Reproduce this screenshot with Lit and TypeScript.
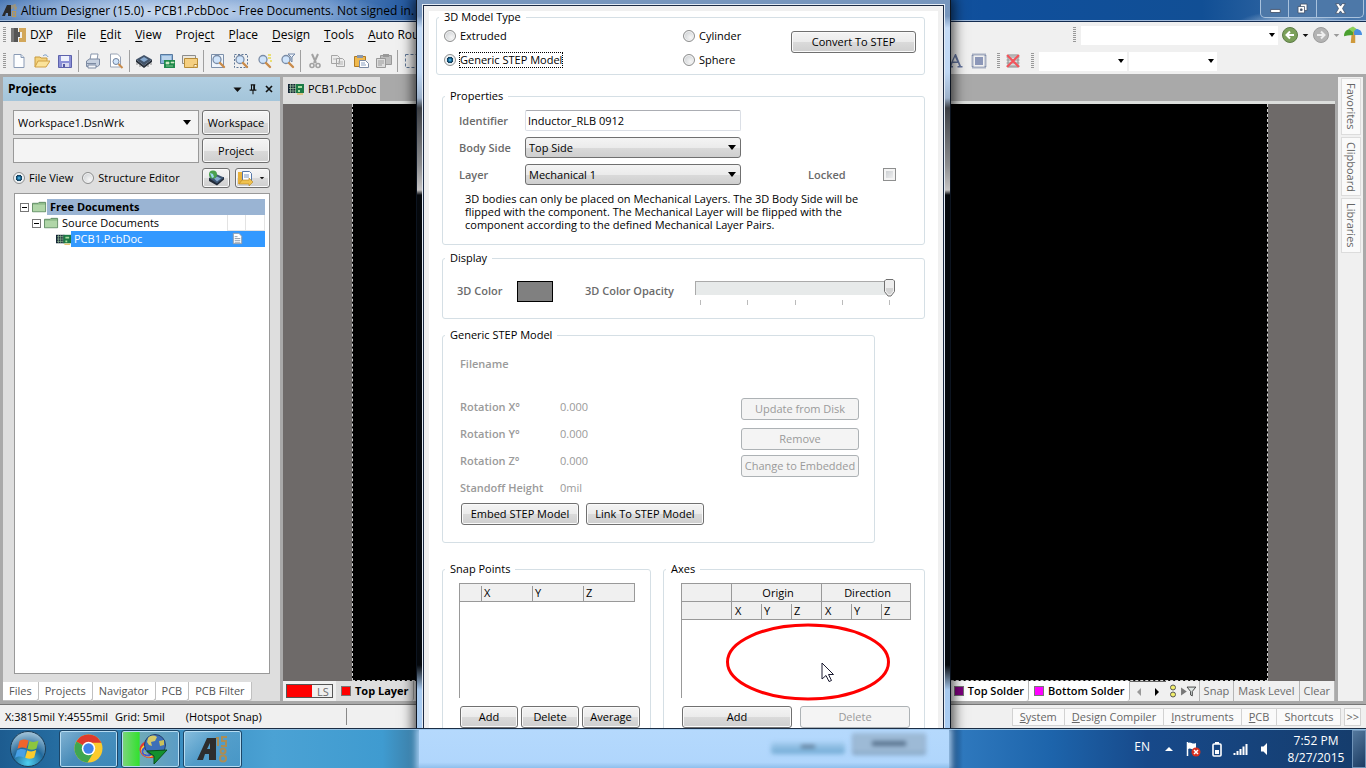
import { LitElement, html, css, svg, nothing } from "lit";
import { customElement } from "lit/decorators.js";

const pcbGlyph = svg`<rect x="0" y="3" width="9" height="9" fill="#123"/><path d="M1 5h7M1 7.500h7M1 10h7M2.500 3v9M5 3v9M7.500 3v9" stroke="#9fc79f" stroke-width=".7"/><path d="M8 3h8v9H8z" fill="#1c7a45"/><path d="M10 5h4v2h-4zM10 9h2v2h-2z" fill="#a8e0a0"/><path d="M9 13h6" stroke="#d9a92b"/>`;
const lens = svg`<circle cx="7" cy="6.500" r="4" fill="#cfe4fb" stroke="#7a8ca6" stroke-width="1.300"/><path d="M10 10l4 4" stroke="#c98b4a" stroke-width="2.400" stroke-linecap="round"/>`;

const ICONS: Record<string, unknown> = {
  logo: svg`<path d="M1 13L6 2h4v11H7v-3H5l-1 3z" fill="#2b2b2b"/><path d="M11 2v4M15 2h-2v2h2v2h-2M11.500 8.500v5h3v-5zM11.500 11h3" stroke="#b5975c" fill="none" stroke-width="1.200"/>`,
  dxp: svg`<path d="M0 1h7v4h2v5H7v5H0z" fill="#555"/><path d="M8 1h7v14H8v-4h3V5H8z" fill="#d2a75b"/><path d="M0 1h3v14H0z" fill="#777"/>`,
  page: svg`<path d="M3 1.500h7l3 3v10H3z" fill="#fdfeff" stroke="#8a9bb5"/><path d="M10 1.500v3h3" fill="#dce6f2" stroke="#8a9bb5"/>`,
  open: svg`<path d="M1 14V4h5l1 1h6v3" fill="#f3d27c" stroke="#c79a3e"/><path d="M1 14l3-6h12l-4 6z" fill="#fbe39a" stroke="#d0a044"/><path d="M9 3c2-2 4-1 5 1" fill="none" stroke="#6d96c5"/>`,
  save: svg`<path d="M1.500 2.500h13v12h-13z" fill="#8a8fd6" stroke="#5d62ab"/><path d="M4 3h8v5H4z" fill="#eef1fb"/><path d="M5 10h7v4H5z" fill="#d6d8ef"/><path d="M6 11h2v3H6z" fill="#5357a0"/>`,
  print: svg`<path d="M5 7l1-6h7l-1 6z" fill="#fff" stroke="#8795ab"/><path d="M1.500 8l3-2h10v6l-2 1.500h-11z" fill="#c6d0df" stroke="#7c8aa2"/><path d="M2 10.500h9" stroke="#7c8aa2"/><path d="M3 12h8v3H3z" fill="#f4f6fa" stroke="#7c8aa2"/>`,
  preview: svg`<path d="M2.500 1h7l3 3v10h-10z" fill="#fff" stroke="#98a3b4"/><circle cx="8" cy="8.500" r="3" fill="#cfe4fb" stroke="#71829b"/><path d="M10.500 11l4 4" stroke="#c98b4a" stroke-width="2"/>`,
  chip: svg`<path d="M0 6.500l8 6 8-6V9l-8 6-8-6z" fill="#29303a"/><path d="M0 6.500L8 2l8 4.500-8 6z" fill="#43546a"/><path d="M4 6.500L8 4l4 2.500L8 9z" fill="#86a9cf"/><path d="M1 10v2M4 12v2M12 12v2M15 10v2" stroke="#888"/>`,
  board: svg`<path d="M1.500 1.500h12v9h-12z" fill="#8fb6dc" stroke="#58799e"/><path d="M3 4h9M3 6h9" stroke="#e8f2fb"/><path d="M5 7h11v8H5z" fill="#1f8a4c"/><path d="M7 9h3v2H7zM12 9h3v1h-3zM7 13h7" fill="#cdeac4" stroke="#cdeac4" stroke-width=".6"/>`,
  docs: svg`<path d="M.500 2.500h13v8h-13z" fill="#ece8dd" stroke="#8c8c8c"/><path d="M2.500 5.500h13v9h-13z" fill="#f5cf80" stroke="#b78c38"/><path d="M12 14.500v-3h3" fill="#fff" stroke="#b78c38"/>`,
  zoomDoc: svg`<path d="M1.500 1.500h12v13h-12z" fill="#eef4fb" stroke="#7d90aa"/>${lens}`,
  zoomSel: svg`<path d="M1.500 1.500h13v13h-13z" fill="none" stroke="#5f7797" stroke-dasharray="2 1.500"/>${lens}`,
  zoomFit: svg`${lens}<path d="M12 2h3M12 5h3M14 8h2" stroke="#e7d94b" stroke-width="1.500"/>`,
  zoomFilter: svg`${lens}<path d="M9 1h7l-3 3v5l-1-1V4z" fill="#eef3fa" stroke="#7288a8"/>`,
  cut: svg`<path d="M5 1l4 9M11 1L7 10" stroke="#a2a2a2" stroke-width="2"/><circle cx="5" cy="12.500" r="2" fill="none" stroke="#a2a2a2" stroke-width="1.600"/><circle cx="11" cy="12.500" r="2" fill="none" stroke="#a2a2a2" stroke-width="1.600"/>`,
  copy: svg`<path d="M1.500 2.500h6l2 2v6h-8zM6.500 5.500h6l2 2v6h-8z" fill="#ececec" stroke="#a5a5a5"/><path d="M8 9h5M8 11h5M3 6h3" stroke="#b5b5b5"/>`,
  paste: svg`<path d="M1.500 3.500h11v10h-11z" fill="#f0b94d" stroke="#b07a23"/><path d="M4 2h6v3H4z" fill="#8a98ad"/><path d="M6.500 7.500h6l3 3v4h-9z" fill="#fff" stroke="#7a8aa3"/><path d="M8 10h4M8 12h5" stroke="#8aa0c0"/>`,
  pasteGrey: svg`<path d="M4.500 2.500h11v9h-11z" fill="#bdbdbd" stroke="#999"/><path d="M7 1h6v3H7z" fill="#999"/><path d="M.500 5.500h9v9h-9z" fill="#ddd" stroke="#999"/><path d="M2 8h6M2 10h6M2 12h4" stroke="#9c9c9c"/>`,
  dashed: svg`<path d="M1.500 1.500h13v13h-13z" fill="none" stroke="#5f7797" stroke-dasharray="3 2"/>`,
  letterA: svg`<path d="M8 1h1l5 12h1.500v1.500h-5V13H12l-1-3H5.500l-1 3H6v1.500H1V13h1.500zM8 4L6 8.500h4z" fill="#65759f"/>`,
  component: svg`<path d="M4 4h8v8H4z" fill="#8c97b8"/><rect x="1.500" y="1.500" width="13" height="13" fill="none" stroke="#5f6f94" stroke-width="2" stroke-dasharray="1 1"/>`,
  clear: svg`<path d="M3 2h10v12H3z" fill="#ddd" stroke="#888"/><path d="M1.500 4h13M1.500 7h13M1.500 10h13M1.500 13h13" stroke="#999"/><path d="M2 2l12 12M14 2L2 14" stroke="#f4535a" stroke-width="2"/>`,
  back: svg`<circle cx="8" cy="8" r="7.500" fill="#7ba05a" stroke="#5e7c48"/><path d="M12 8H5M8 4.500L4.500 8 8 11.500" stroke="#fff" stroke-width="2" fill="none"/>`,
  forward: svg`<circle cx="8" cy="8" r="7.500" fill="#b3b3b3" stroke="#9c9c9c"/><path d="M4 8h7M8 4.500L11.500 8 8 11.500" stroke="#eee" stroke-width="2" fill="none"/>`,
  palm: svg`<path d="M7 4h3v11H6z" fill="#cf9a3c"/><path d="M0 9c0-5 4-7 8-6v5l-5 .500z" fill="#4aa02f"/><path d="M9 3c4-1 7 1 7 5H9z" fill="#4c8fe0"/><path d="M4 2.500L8 .500l3 2-3 3z" fill="#8ed05a"/>`,
  pcb: pcbGlyph,
  folder: svg`<path d="M.500 12.500v-9h6l1-1h7v10z" fill="#8fbd8a" stroke="#5e8a62"/><path d="M1 5h13v7H1z" fill="#b0d6a8"/>`,
  sheet: svg`<path d="M3.500 2.500h6l3 3v8h-9z" fill="#fff" stroke="#8a97a8"/><path d="M5 6h3M5 8h6M5 10h6M5 12h6" stroke="#7a8797" stroke-width=".8"/>`,
  globeChip: svg`<path d="M1 8v3l8 4.500 7-6V7z" fill="#222b38"/><path d="M1 8l7-4 8 3.500-7 6z" fill="#3e5673"/><path d="M6 8.500L9 6.500l4 2-4 3z" fill="#86a9cf"/><circle cx="5" cy="4.500" r="4" fill="#4aa04e"/><path d="M2 3l3 1 1 3-2 1z" fill="#9ed6f0"/>`,
  folderDoc: svg`<path d="M1 2h6l1 2v10H1z" fill="#e9b23c"/><path d="M5.500 1.500h7l2 2v8h-9z" fill="#fff" stroke="#5778a8"/><path d="M7 5h5M7 7h5" stroke="#7b98c4"/><path d="M2 14l3-4h7V8l4 4-4 4v-2z" fill="#f0c24e" stroke="#b18120" stroke-width=".6"/>`,
  pin: svg`<path d="M5 2.500h6M6 3v6M10 3v6M9 3v6M3.500 9.500h9M8 10v5" stroke="#111" stroke-width="1.400"/>`,
  cross: svg`<path d="M4 4l8 8M12 4l-8 8" stroke="#111" stroke-width="2.200"/>`,
  down: svg`<path d="M3 5.500h10L8 11z" fill="#111"/>`,
  smallDown: svg`<path d="M5 6.500h6L8 9.500z" fill="#111"/>`,
  greyDown: svg`<path d="M5 6.500h6L8 9.500z" fill="#999"/>`,
  prev: svg`<path d="M10 4v8L6 8z" fill="#999"/>`,
  next: svg`<path d="M6 4v8l4-4z" fill="#000"/>`,
  dots: svg`<circle cx="6" cy="4.500" r="2.500" fill="#f1ee6a" stroke="#555"/><circle cx="6" cy="11.500" r="2.500" fill="#f1ee6a" stroke="#555"/>`,
  play: svg`<path d="M5 3v10l7-5z" fill="#777"/>`,
  funnel: svg`<path d="M3.500 3.500h10l-4 5v5l-2-1v-4z" fill="#dfe6e4" stroke="#333"/>`,
  minimise: svg`<path d="M3 8.500h11v3.500H3z" fill="#fff" stroke="#43536b"/>`,
  restore: svg`<path d="M5.500 2.500h8v8h-8z" fill="#fff" stroke="#43536b"/><path d="M2.500 5.500h8v8h-8z" fill="#fff" stroke="#43536b"/><path d="M5.500 8.500h2v2h-2z" fill="#43536b" stroke="#43536b"/>`,
  close: svg`<path d="M2 2h4l2 3 2-3h4l-3.500 6 3.500 6h-4l-2-3-2 3H2l3.500-6z" fill="#fff" stroke="#43536b"/>`,
  up: svg`<path d="M4 10h8L8 6z" fill="#fff"/>`,
  flag: svg`<path d="M2.500 1v14" stroke="#fff" stroke-width="1.500"/><path d="M3 2c3-2 4 2 8 0v6c-4 2-5-2-8 0z" fill="#fff"/><circle cx="11" cy="11" r="4.500" fill="#d9301f"/><path d="M9 9l4 4M13 9l-4 4" stroke="#fff" stroke-width="1.500"/>`,
  battery: svg`<rect x="4" y="3" width="8" height="12" rx="1" fill="none" stroke="#fff" stroke-width="1.600"/><path d="M6 1h4v2H6zM6 9h4v4H6z" fill="#fff"/>`,
  signal: svg`<path d="M1.500 12v2M4.500 10v4M7.500 8v6M10.500 5.500V14M13.500 3v11" stroke="#fff" stroke-width="2"/>`,
  speaker: svg`<path d="M4 5.500h2.500L10 2v12l-3.500-3.500H4z" fill="#fff"/>`,
};

const icon = (name: string, size = 16) =>
  html`<svg class="icon" width=${size} height=${size} viewBox="0 0 16 16" aria-hidden="true">${ICONS[name]}</svg>`;

const arrow = css`url("data:image/svg+xml,%3Csvg xmlns='http://www.w3.org/2000/svg' width='8' height='5'%3E%3Cpath d='M0 0h8L4 5z' fill='%23000'/%3E%3C/svg%3E")`;
const smallArrow = css`url("data:image/svg+xml,%3Csvg xmlns='http://www.w3.org/2000/svg' width='6' height='4'%3E%3Cpath d='M0 0h6L3 4z' fill='%23000'/%3E%3C/svg%3E")`;
const thumb = css`url("data:image/svg+xml,%3Csvg xmlns='http://www.w3.org/2000/svg' width='11' height='18'%3E%3Cpath d='M2 .5h7L10.500 2v10.500L7 17H4L.5 12.500V2z' fill='%23eee' stroke='%23707070'/%3E%3Cpath d='M2 9h7v3L6.500 15h-2L2 12z' fill='%23d4d4d4'/%3E%3C/svg%3E")`;

const shared = css`
  * { box-sizing: border-box; }
  .icon { display: block; flex: none; }
  button, input, select { font: inherit; color: inherit; margin: 0; }
  button { padding: 0; }
  .push {
    height: 22px;
    border: 1px solid #707070;
    border-radius: 3px;
    background: linear-gradient(#f4f4f4, #ebebeb 50%, #dadada 52%, #cfcfcf);
    box-shadow: inset 0 0 0 1px #fafafa;
    color: #000;
    white-space: nowrap;
  }
  .push:disabled { background: #f4f4f4; border-color: #adb2b5; color: #9a9a9a; box-shadow: none; }
  input[type="radio"] {
    appearance: none;
    width: 12px;
    height: 12px;
    flex: none;
    border: 1px solid #8e8f8f;
    border-radius: 50%;
    background: radial-gradient(circle at 65% 65%, #f6f6f6, #c4c8cc);
    box-shadow: inset 0 0 0 1px #f4f4f4;
  }
  input[type="radio"]:checked {
    background: radial-gradient(circle, #6fd0f5 0, #1b6f9f 22%, #10354f 42%, #e6edf2 50%);
  }
  .radio { display: flex; align-items: center; gap: 4px; }
`;

const MENU = [["", "F", "ile"], ["", "E", "dit"], ["", "V", "iew"], ["Proje", "c", "t"], ["", "P", "lace"], ["", "D", "esign"], ["", "T", "ools"], ["", "A", "uto Route"]];
const TOOLS = [
  ["page", "open", "save"],
  ["print", "preview"],
  ["chip", "board", "docs"],
  ["zoomDoc", "zoomSel", "zoomFit", "zoomFilter"],
  ["cut", "copy", "paste", "pasteGrey"],
  ["dashed"],
];

@customElement("title-menu")
class TitleMenu extends LitElement {
  static styles = [shared, css`
    :host { display: block; background: #f0f0f0; font-size: 12px; }
    .title {
      height: 22px;
      display: flex;
      align-items: center;
      padding-left: 1px;
      gap: 4px;
      border-bottom: 1px solid #142c50;
      box-shadow: inset 0 -1px #9fb9da;
      background:
        radial-gradient(ellipse 220px 24px at 170px 12px, #e0eaf7d8, #bcd0eb80 60%, transparent),
        radial-gradient(ellipse 60px 16px at 1295px 26px, #cddcec, transparent),
        linear-gradient(90deg, #3c6dae 0, #6d97cd 10%, #5b89c4 24%, #24599f 30%, #2a5f9f 50%, #0f4f9c 72%, #114f95 88%, #4c7aae);
    }
    .title .name { flex: 1; line-height: 20px; }
    .win { display: flex; align-self: flex-start; margin-right: 2px; height: 18px; border: 1px solid #a9c2dd; border-top: 0; border-radius: 0 0 5px 5px; background: #4d78a8; }
    .win button { display: grid; place-items: center; border: 0; border-right: 1px solid #a9c2dd; background: none; width: 28px; }
    .win button:last-child { width: 46px; border: 0; }
    .row { height: 26px; display: flex; align-items: center; padding-left: 3px; }
    .grip { width: 3px; height: 16px; flex: none; background: repeating-linear-gradient(#999 0 1px, transparent 1px 2px); }
    nav { display: flex; align-items: center; gap: 14px; margin-left: 5px; }
    nav a { color: #000; text-decoration: none; white-space: nowrap; }
    nav u { text-underline-offset: 2px; }
    nav .dxp { display: flex; align-items: center; gap: 3px; }
    .tools { display: flex; align-items: center; margin-left: 1px; }
    .tools button { width: 23px; height: 24px; display: grid; place-items: center; border: 0; background: none; }
    .sep { width: 1px; height: 22px; background: #a0a0a0; margin: 0 2px; }
    .end { margin-left: auto; display: flex; align-items: center; padding-right: 4px; }
    .end button { border: 0; background: none; }
    .end .grip { margin-right: 5px; }
    .format { padding-right: 147px; }
    .format button { margin-right: 8px; }
    .format .grip { margin-left: 2px; }
    .combo { appearance: none; border: 0; height: 19px; width: 88px; border-radius: 0; background: #fff ${smallArrow} no-repeat right 3px center; margin-right: 2px; }
    .combo.wide { width: 197px; margin-right: 4px; }
  `];
  render() {
    return html`
      <header class="title">${icon("logo")}<span class="name">Altium Designer (15.0) - PCB1.PcbDoc - Free Documents. Not signed in.</span>
        <span class="win"><button aria-label="Minimise">${icon("minimise", 14)}</button><button aria-label="Restore">${icon("restore", 13)}</button><button aria-label="Close">${icon("close", 13)}</button></span>
      </header>
      <div class="row"><span class="grip"></span>
        <nav><a href="#" class="dxp">${icon("dxp")}<span>D<u>X</u>P</span></a>${MENU.map(([a, u, b]) => html`<a href="#">${a}<u>${u}</u>${b}</a>`)}</nav>
        <div class="end"><span class="grip"></span><select class="combo wide" aria-label="Address"></select>
          <button aria-label="Back">${icon("back")}</button><button aria-label="Back history">${icon("smallDown", 15)}</button>
          <button aria-label="Forward">${icon("forward")}</button><button aria-label="Forward history">${icon("greyDown", 15)}</button>
          <button aria-label="Home">${icon("palm", 18)}</button></div>
      </div>
      <div class="row"><span class="grip"></span>
        <div class="tools">${TOOLS.map((g, i) => html`${i ? html`<span class="sep"></span>` : nothing}${g.map((n) => html`<button aria-label=${n}>${icon(n)}</button>`)}`)}</div>
        <div class="end format"><button aria-label="Text">${icon("letterA")}</button><button aria-label="Component">${icon("component")}</button><span class="grip"></span><button aria-label="Clear">${icon("clear")}</button><span class="grip"></span><select class="combo" aria-label="Filter"></select><select class="combo" aria-label="Mask"></select></div>
      </div>`;
  }
}

@customElement("projects-panel")
class ProjectsPanel extends LitElement {
  static styles = [shared, css`
    :host { display: flex; flex-direction: column; width: 277px; background: #dedede; }
    header { height: 24px; flex: none; display: flex; align-items: center; padding: 0 3px 0 5px; background: linear-gradient(#b2cfe2, #a4c5da); font-size: 12px; font-weight: 700; }
    header span { flex: 1; }
    header button { border: 0; background: none; width: 16px; display: grid; place-items: center; }
    .body { flex: 1; display: flex; flex-direction: column; padding: 9px 10px 8px; }
    .pick { display: grid; grid-template-columns: 1fr 68px; gap: 3px; }
    .pick .push { height: 25px; }
    .field { height: 25px; min-width: 0; border: 1px solid #999; border-radius: 0; padding: 0 4px; background: #f4f4f4; }
    select.field { appearance: none; background: #f4f4f4 ${arrow} no-repeat right 7px center; }
    .view { display: flex; align-items: center; gap: 9px; height: 20px; margin: 5px 0; }
    .view .push { height: 20px; display: flex; align-items: center; justify-content: center; width: 28px; }
    .view .push.first { margin-left: auto; }
    .view .push.split { width: 35px; margin-left: -4px; gap: 3px; }
    .tree { flex: 1; margin: 0 0 0 1px; border: 1px solid #999; background: #fff; padding: 5px 4px 0 5px; }
    .node { display: flex; align-items: center; height: 16px; }
    .box { width: 9px; height: 9px; border: 1px solid #777; background: linear-gradient(#000, #000) center / 5px 1px no-repeat; margin-right: 3px; flex: none; }
    .text { flex: 1; line-height: 16px; padding-left: 3px; height: 16px; display: flex; justify-content: space-between; }
    .root .text { background: #9ab4d3; font-weight: 700; }
    .l2 { padding-left: 12px; }
    .l2 .text::after { content: ""; width: 36px; border: 1px solid #e3e3e3; border-top: 0; background: linear-gradient(#e3e3e3, #e3e3e3) 17px 0 / 1px 100% no-repeat; }
    .l3 { padding-left: 36px; }
    .l3 .text { background: #3399ff; color: #fff; padding-right: 20px; }
    .tabs { display: flex; height: 19px; flex: none; }
    .tabs button { flex: none; border: 1px solid #c0c0c0; border-width: 0 1px 1px 0; border-radius: 0 0 3px 0; background: #fff; color: #555; padding: 0 6px; }
  `];
  render() {
    return html`
      <header><span>Projects</span><button aria-label="Options">${icon("down", 13)}</button><button aria-label="Pin">${icon("pin", 12)}</button><button aria-label="Close">${icon("cross", 12)}</button></header>
      <div class="body">
        <div class="pick">
          <select class="field" aria-label="Workspace file"><option>Workspace1.DsnWrk</option></select><button class="push">Workspace</button>
          <input class="field" aria-label="Project file"><button class="push">Project</button>
        </div>
        <div class="view">
          <label class="radio"><input type="radio" name="v" checked>File View</label>
          <label class="radio"><input type="radio" name="v">Structure Editor</label>
          <button class="push first" aria-label="Compile">${icon("globeChip")}</button>
          <button class="push split" aria-label="Open documents">${icon("folderDoc")}${icon("smallDown", 12)}</button>
        </div>
        <div class="tree">
          <div class="node root"><span class="box"></span>${icon("folder", 15)}<span class="text">Free Documents</span></div>
          <div class="node l2"><span class="box"></span>${icon("folder", 15)}<span class="text">Source Documents</span></div>
          <div class="node l3">${icon("pcb", 15)}<span class="text">PCB1.PcbDoc ${icon("sheet", 15)}</span></div>
        </div>
      </div>
      <div class="tabs">${["Files", "Projects", "Navigator", "PCB", "PCB Filter"].map((t) => html`<button>${t}</button>`)}</div>`;
  }
}

@customElement("pcb-editor")
class PcbEditor extends LitElement {
  static styles = [shared, css`
    :host { display: flex; flex-direction: column; min-width: 0; }
    .tab { height: 24px; width: 97px; flex: none; display: flex; align-items: center; gap: 4px; padding-left: 5px; background: #dedede; }
    .canvas { flex: 1; display: grid; padding: 0 67px 0 69px; background: #6e6a69; border-top: 3px solid #dcdedc; }
    .board { background: #000; border: 1px dashed #d0d0d0; border-top: 0; }
    .bar { height: 20px; flex: none; display: flex; background: #f0f0f0; color: #6a6a6a; }
    .ls { display: flex; width: 47px; height: 14px; margin: 3px 3px 0; border: 1px solid #555; line-height: 13px; }
    .ls i { width: 25px; background: red; margin-right: 5px; }
    .layer { display: flex; align-items: center; gap: 4px; padding: 0 4px 0 5px; border: 0; border-right: 1px solid #aaa; border-radius: 0 0 3px 0; background: #fff; color: #000; font-weight: 600; }
    .layer.on { background: #dedede; font-weight: 700; }
    .layer i { width: 10px; height: 10px; border: 1px solid #777; }
    .red { background: red; } .purple { background: #800080; } .pink { background: #f0f; }
    .right { margin-left: auto; display: flex; }
    .right button { border: 0; border-right: 1px solid #b5b5b5; background: #f0f0f0; padding: 0 4px; display: flex; align-items: center; }
    .right .layer { background: #fff; padding: 0 4px 0 5px; }
    .right .nav { border-top: 1px solid #666; border-right: 0; padding: 0 1px; }
    .right .filter .icon { margin: 0 -3px; }
  `];
  render() {
    const layer = (c: string, t: string, on = false) => html`<button class="layer ${on ? "on" : ""}"><i class=${c}></i>${t}</button>`;
    return html`
      <div class="tab">${icon("pcb", 16)}PCB1.PcbDoc</div>
      <div class="canvas"><div class="board"></div></div>
      <div class="bar"><span class="ls"><i></i>LS</span>${layer("red", "Top Layer", true)}
        <div class="right">${layer("purple", "Top Solder")}${layer("pink", "Bottom Solder")}
          <button class="nav" aria-label="Previous layers">${icon("prev")}</button><button class="nav" aria-label="Next layers">${icon("next")}</button>
          <button class="filter" aria-label="Filter">${icon("dots")}${icon("play", 13)}${icon("funnel", 14)}</button>
          <button>Snap</button><button>Mask Level</button><button>Clear</button></div>
      </div>`;
  }
}

@customElement("model-dialog")
class ModelDialog extends LitElement {
  static styles = [shared, css`
    :host {
      display: block;
      padding: 4px 5px 0;
      border: 1px solid #0c1420;
      border-width: 0 1px;
      background: linear-gradient(#7796bd 0, #7796bd 16px, #c5dbf5 28px, #c0d8f4 72px, #9db1ca 98px, #3c3f44 108px, #8b8c8e 165px, #c5c3c3 190px, #05080c 195px, #05080c 665px, #a8caef 690px, #b4d7fc);
      box-shadow: 0 0 12px 3px #000000b0;
    }
    .glass { border: 1px solid #e4ecf5; border-bottom: 0; }
    .client { border: 1px solid #1d2b44; border-bottom: 0; background: #f0f0f0; padding: 5px 5px 0; }
    .page { position: relative; background: #fff; padding: 0 13px; min-height: 860px; }
    fieldset { margin: 0; min-width: 0; border: 1px solid #d5dfe5; border-radius: 3px; --inset: 16px; }
    legend { padding: 0 5px; margin-left: calc(2px - var(--inset)); line-height: 12px; }
    .type { --inset: 7px; display: grid; grid-template-columns: 239px 108px 125px; grid-auto-rows: 24px; margin-left: -6px; padding: 1px 8px 2px var(--inset); }
    .type .push { grid-area: 1 / 3 / 3 / 4; margin-top: 7px; }
    .focus { outline: 1px dotted #000; }
    .props { margin-top: 15px; padding: 8px 8px 13px var(--inset); }
    .grid { display: grid; grid-template-columns: 66px 216px 67px 75px 13px; grid-auto-rows: 21px; row-gap: 6px; align-items: center; }
    .grid .name { grid-column: 1; }
    .name { color: #6a6a6a; font-weight: 600; }
    .field { height: 21px; border: 1px solid #dbdfe6; border-top-color: #abadb3; border-radius: 2px; padding: 0 2px; background: #fff; }
    select.drop { appearance: none; height: 21px; padding: 0 3px; background: ${arrow} no-repeat right 4px center, linear-gradient(#f4f4f4, #ebebeb 50%, #dadada 52%, #cfcfcf); border: 1px solid #707070; border-radius: 3px; }
    .grid .locked { grid-area: 3 / 4; }
    input[type="checkbox"] { grid-area: 3 / 5; appearance: none; width: 13px; height: 13px; border: 1px solid #8e8f8f; background: linear-gradient(135deg, #c4c8cc, #f6f6f6); box-shadow: inset 0 0 0 2px #f4f4f4; }
    p { margin: 7px 0 0 6px; width: 404px; line-height: 13px; }
    .display { --inset: 14px; margin-top: 7px; padding: 15px 8px 13px var(--inset); height: 67px; display: flex; align-items: flex-start; }
    .display .name { line-height: 24px; }
    .display label.name { width: 60px; }
    .display .opacity.name { width: 110px; margin-left: 32px; }
    .swatch { width: 36px; height: 21px; margin-top: 2px; padding: 0; border: 1px solid #000; background: #808080; }
    .slider { width: 200px; }
    input[type="range"] { appearance: none; display: block; width: 200px; height: 18px; background: linear-gradient(#e7eaea, #e7eaea) 1px 3px / 194px 13px no-repeat, linear-gradient(#aaa, #aaa) 0 2px / 195px 14px no-repeat; }
    input[type="range"]::-webkit-slider-thumb { appearance: none; width: 11px; height: 18px; background: ${thumb} no-repeat; }
    .ticks { display: flex; justify-content: space-between; padding: 3px 5px 0; }
    .ticks i { width: 1px; height: 5px; background: #bbb; }
    .step { --inset: 17px; margin-top: 10px; margin-right: 50px; padding: 9px 15px 17px var(--inset); }
    .step .name, .step dd { color: #9a9a9a; }
    .file { line-height: 27px; margin-bottom: 16px; }
    .cols { display: flex; justify-content: space-between; }
    dl { display: grid; grid-template-columns: 100px auto; grid-auto-rows: 27px; margin: 0 0 2px; line-height: 27px; }
    dd { margin: 0; }
    .side { display: flex; flex-direction: column; width: 118px; padding-top: 5px; }
    .side .push + .push { margin-top: 8px; }
    .side .push + .push + .push { margin-top: 5px; }
    .links { display: flex; gap: 7px; margin-left: 1px; }
    .links .push { width: 118px; }
    .lists { display: flex; gap: 12px; margin-top: 20px; }
    .lists fieldset { height: 240px; padding: 8px 0 0 var(--inset); }
    .snap { width: 209px; }
    .axes { flex: 1; --inset: 17px; }
    .list { height: 115px; border-left: 1px solid #999; margin-bottom: 8px; }
    table { border-collapse: separate; border-spacing: 0; table-layout: fixed; background: #f0f0f0; border-top: 1px solid #999; border-right: 1px solid #999; }
    th { height: 18px; padding: 0 0 0 3px; font-weight: 400; text-align: left; line-height: 17px; border-bottom: 1px solid #999; background: linear-gradient(#999, #999) 0 2px / 1px 15px no-repeat; }
    .snap table { width: 175px; }
    .axes table { width: 229px; }
    th:first-child, th.edge { background: none; }
    th.edge { border-left: 1px solid #999; }
    th.group { text-align: center; }
    .ops { display: flex; gap: 3px; margin-left: 1px; }
    .ops .push { width: 58px; }
    .axes .ops { gap: 8px; }
    .axes .ops .push { width: 110px; }
    .mark { position: absolute; left: 295px; top: 611px; pointer-events: none; }
  `];
  render() {
    const name = (t: string, f: string) => html`<label class="name" for=${f}>${t}</label>`;
    return html`<div class="glass"><div class="client"><div class="page">
      <fieldset class="type"><legend>3D Model Type</legend>
        <label class="radio"><input type="radio" name="t">Extruded</label><label class="radio"><input type="radio" name="t">Cylinder</label>
        <label class="radio"><input type="radio" name="t" checked><span class="focus">Generic STEP Model</span></label><label class="radio"><input type="radio" name="t">Sphere</label>
        <button class="push">Convert To STEP</button>
      </fieldset>
      <fieldset class="props"><legend>Properties</legend>
        <div class="grid">
          ${name("Identifier", "ident")}<input id="ident" class="field" .value=${"Inductor_RLB 0912"}>
          ${name("Body Side", "side")}<select id="side" class="drop"><option>Top Side</option></select>
          ${name("Layer", "layer")}<select id="layer" class="drop"><option>Mechanical 1</option></select>
          <label class="name locked" for="lock">Locked</label><input id="lock" type="checkbox">
        </div>
        <p>3D bodies can only be placed on Mechanical Layers. The 3D Body Side will be flipped with the component. The Mechanical Layer will be flipped with the component according to the defined Mechanical Layer Pairs.</p>
      </fieldset>
      <fieldset class="display"><legend>Display</legend>
        <label class="name" for="color">3D Color</label><button id="color" class="swatch"></button>
        <label class="name opacity" for="op">3D Color Opacity</label>
        <div class="slider"><input id="op" type="range" min="0" max="100" .value=${"100"}><div class="ticks"><i></i><i></i><i></i><i></i><i></i></div></div>
      </fieldset>
      <fieldset class="step"><legend>Generic STEP Model</legend>
        <div class="name file">Filename</div>
        <div class="cols">
          <dl>${[["Rotation X°", "0.000"], ["Rotation Y°", "0.000"], ["Rotation Z°", "0.000"], ["Standoff Height", "0mil"]].map(([k, v]) => html`<dt class="name">${k}</dt><dd>${v}</dd>`)}</dl>
          <div class="side"><button class="push" disabled>Update from Disk</button><button class="push" disabled>Remove</button><button class="push" disabled>Change to Embedded</button></div>
        </div>
        <div class="links"><button class="push">Embed STEP Model</button><button class="push">Link To STEP Model</button></div>
      </fieldset>
      <div class="lists">
        <fieldset class="snap"><legend>Snap Points</legend>
          <div class="list"><table><colgroup><col width="21"><col width="51"><col width="51"><col width="51"></colgroup><tr><th></th><th>X</th><th>Y</th><th>Z</th></tr></table></div>
          <div class="ops"><button class="push">Add</button><button class="push">Delete</button><button class="push">Average</button></div>
        </fieldset>
        <fieldset class="axes"><legend>Axes</legend>
          <div class="list"><table><colgroup><col width="49"><col width="30"><col width="30"><col width="30"><col width="30"><col width="30"><col width="29"></colgroup>
            <tr><th></th><th class="edge group" colspan="3">Origin</th><th class="edge group" colspan="3">Direction</th></tr>
            <tr><th></th><th class="edge">X</th><th>Y</th><th>Z</th><th class="edge">X</th><th>Y</th><th>Z</th></tr></table></div>
          <div class="ops"><button class="push">Add</button><button class="push" disabled>Delete</button></div>
        </fieldset>
      </div>
      <svg class="mark" width="168" height="80" viewBox="0 0 168 80"><ellipse cx="84" cy="40" rx="80.500" ry="37" fill="none" stroke="#f00" stroke-width="3"/><path d="M98 41v16l4-3.500 3 6 2.500-1-3-6h5z" fill="#fff" stroke="#1a1a30"/></svg>
    </div></div></div>`;
  }
}

@customElement("task-bar")
class TaskBar extends LitElement {
  static styles = [shared, css`
    :host { display: flex; align-items: center; position: relative; overflow: hidden; height: 40px; border-top: 1px solid #1b2d44; box-shadow: inset 0 1px #8fbde0; color: #fff; background: linear-gradient(90deg, #1d5c90 0, #2f80b4 9%, #4ba2d4 20%, #3f9bd0 28%, #3d7ea6 30.500%, #16406f 69.500%, #2e78bd 70.500%, #1d64ab 77%, #17498a 84%, #153c6b); }
    .haze { position: absolute; left: 50%; top: 1px; bottom: 0; width: 530px; margin-left: -264px; background: linear-gradient(#b5d9fd, #b0d6fc 85%, #8fbfec); box-shadow: 0 0 6px 3px #a6cdf2; }
    .ghost { position: absolute; top: 12px; height: 12px; width: 74px; border-radius: 3px; filter: blur(2px); background: linear-gradient(#a5cdef, #6fa9d3); right: 104px; }
    .ghost.b { right: 23px; top: 3px; height: 22px; background: #9dbad6; box-shadow: inset 0 -2px 3px #7d9cba; }
    .ghost i { position: absolute; left: 20px; right: 20px; top: 8px; height: 5px; background: #5b7590; }
    .ghost.a i { left: 30px; right: 30px; top: 3px; height: 3px; }
    .orb { border: 0; background: none; padding: 0 4px 0 0; width: 59px; display: grid; place-items: center; }
    .app { width: 59px; height: 38px; margin: 0 3px 0 0; padding: 0; display: grid; place-items: center; border: 1px solid #1c4668; border-radius: 3px; box-shadow: inset 0 0 0 1px #b5dcf2; background: linear-gradient(135deg, #b8dcf0a0, #67a6cc80 45%, #4a93c080); }
    .app.idm { background: linear-gradient(90deg, #7fd47f, #33e12f 30%, #6ea9b8 32%, #5a9cc6); }
    .tray { margin-left: auto; display: flex; align-items: center; font-size: 12px; }
    .tray .icon { margin-right: 8px; }
    .lang { margin-right: 11px; line-height: 16px; margin-top: -4px; }
    .clock { text-align: center; line-height: 17px; width: 62px; margin: 0 5px 0 4px; }
    .peek { width: 14px; height: 38px; border: 1px solid #6f93b8; background: linear-gradient(135deg, #54789d, #1c3c63); padding: 0; }
  `];
  render() {
    return html`
      <button class="orb" aria-label="Start"><svg width="38" height="38" viewBox="0 0 38 38"><defs><radialGradient id="o" cx=".5" cy=".9" r=".9"><stop offset="0" stop-color="#4fd0f0"/><stop offset=".5" stop-color="#22699c"/><stop offset="1" stop-color="#a8c8dc"/></radialGradient></defs><circle cx="19" cy="19" r="17.500" fill="url(#o)" stroke="#1b3c55"/><path d="M10.500 11c3-2 5.500-2 9-.5l-2 8c-3-1.500-5.500-1.500-9 .3z" fill="#f0642c"/><path d="M20.500 11c3.500 1.500 6 1 9-.5l-2 8c-3 1.500-5.500 1.500-9 .3z" fill="#8cc63e"/><path d="M8 20.500c3-2 5.500-2 9-.5l-2 7.500c-3-1.500-5.500-1.500-9 .3z" fill="#48a0e6"/><path d="M18.200 20.500c3.500 1.500 6 1 9-.5l-2 7.500c-3 1.500-5.500 1.500-9 .3z" fill="#fccb2e"/></svg></button>
      <button class="app" aria-label="Chrome"><svg width="29" height="29" viewBox="0 0 28 28"><circle cx="14" cy="14" r="13.500" fill="#fbcb2c"/><path d="M14 14L2.300 7.250A13.500 13.500 0 0 1 25.700 7.250L26.500 8.500H14z" fill="#de3b2c"/><path d="M14 14L2.300 7.250A13.500 13.500 0 0 0 13 27.500l5.500-9z" fill="#3fa650"/><circle cx="14" cy="14" r="6.500" fill="#fff"/><circle cx="14" cy="14" r="5" fill="#3f83e8"/></svg></button>
      <button class="app idm" aria-label="Download manager"><svg width="34" height="32" viewBox="0 0 34 32"><path d="M14 9A9 7.500 0 1 0 20 23" fill="none" stroke="#e5392f" stroke-width="2.500"/><path d="M14 12A7 5.500 0 1 0 19 22" fill="none" stroke="#ffe02e" stroke-width="2.500"/><path d="M14 14.500A5 4 0 1 0 18 20" fill="none" stroke="#3d57d6" stroke-width="2"/><circle cx="21" cy="12" r="10.500" fill="#3d6fb8" stroke="#23406e"/><path d="M14 5c3-3 6-3 9-1l-2 4-4 1 1 4-3-1-2-3z" fill="#d5c969"/><path d="M25 8l5-1v5l-4 1z" fill="#c9c05a"/><path d="M13 18l20-1-13 14 0-8z" fill="#13912d" stroke="#0a4f18"/></svg></button>
      <button class="app" aria-label="Altium Designer"><svg width="34" height="30" viewBox="0 0 34 30"><path d="M1 26L11 4h9v22h-7v-6H9l-2 6zM11 15h3V9z" fill="#2d2d2d"/><path d="M20 4h2v8M31 3h-5v4h4v5h-5" fill="none" stroke="#a98d57" stroke-width="2"/><circle cx="27" cy="17" r="2.500" fill="none" stroke="#a98d57" stroke-width="2"/><circle cx="27" cy="24.500" r="3" fill="none" stroke="#a98d57" stroke-width="2"/></svg></button>
      <div class="haze"><span class="ghost a"><i></i></span><span class="ghost b"><i></i></span></div>
      <div class="tray"><span class="lang">EN</span>${["up", "flag", "battery", "signal", "speaker"].map((n) => icon(n))}<span class="clock">7:52 PM<br>8/27/2015</span><button class="peek" aria-label="Show desktop"></button></div>`;
  }
}

@customElement("app-root")
class AppRoot extends LitElement {
  static styles = [shared, css`
    :host { display: flex; flex-direction: column; height: 100vh; font: 11px/14px "Open Sans", "Noto Sans", sans-serif; color: #000; overflow: hidden; }
    .desktop { position: relative; flex: 1; min-height: 0; overflow: hidden; display: flex; flex-direction: column; }
    .work { flex: 1; min-height: 0; display: flex; padding: 3px; background: #a9a9a9; }
    .split { width: 3px; }
    pcb-editor { flex: 1; }
    aside { display: flex; flex-direction: column; gap: 2px; width: 25px; margin-left: 3px; padding: 1px 2px 0 3px; background: #f0f0f0; }
    aside button { writing-mode: vertical-rl; width: 20px; padding: 4px 0; border: 1px solid #dcdcdc; background: #fafafa; color: #666; line-height: 16px; }
    .status { display: flex; align-items: center; height: 24px; flex: none; padding: 0 5px; border-top: 1px solid #777; background: #f0f0f0; }
    .status .grid { margin: 0 21px 0 7px; }
    .status .mark { width: 1px; height: 17px; background: #888; margin-left: 84px; }
    .panels { margin-left: auto; display: flex; height: 18px; }
    .panels button { border: 1px solid #d2d2d2; margin-left: -1px; background: #fafafa; color: #666; padding: 0 7px; }
    .panels .more { margin-left: 3px; padding: 0 1px; }
    model-dialog { position: absolute; top: 0; left: 50%; width: 535px; margin-left: -267px; z-index: 1; }
  `];
  render() {
    const panels = [["S", "ystem"], ["D", "esign Compiler"], ["I", "nstruments"], ["P", "CB"], ["", "Shortcuts"]];
    return html`
      <div class="desktop">
        <title-menu></title-menu>
        <main class="work"><projects-panel></projects-panel><span class="split"></span><pcb-editor></pcb-editor>
          <aside><button>Favorites</button><button>Clipboard</button><button>Libraries</button></aside></main>
        <footer class="status"><span>X:3815mil Y:4555mil</span><span class="grid">Grid: 5mil</span><span>(Hotspot Snap)</span><span class="mark"></span>
          <div class="panels">${panels.map(([u, r]) => html`<button><u>${u}</u>${r}</button>`)}<button class="more">&gt;&gt;</button></div></footer>
        <model-dialog></model-dialog>
      </div>
      <task-bar></task-bar>`;
  }
}
